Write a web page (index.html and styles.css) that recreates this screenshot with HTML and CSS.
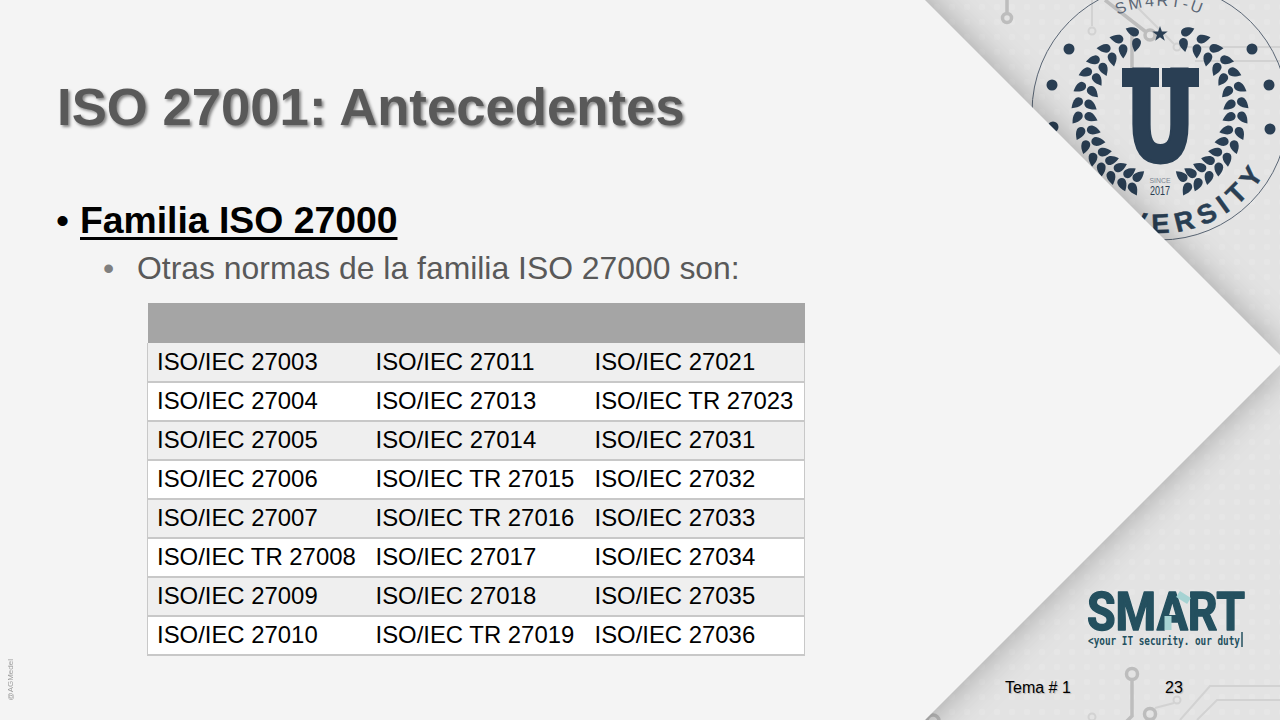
FILE: index.html
```html
<!DOCTYPE html>
<html lang="es">
<head>
  <meta charset="UTF-8">
  <title>ISO 27001: Antecedentes</title>
  <link rel="stylesheet" href="styles.css">
</head>
<body>
<div class="slide">

  <!-- backdrop: grey panel, circuit traces, badge and logo, then the pale chevron on top -->
  <svg class="backdrop" width="1280" height="720" viewBox="0 0 1280 720">
    <defs>
      <pattern id="dots" width="15" height="15" patternUnits="userSpaceOnUse">
        <rect x="4" y="4" width="6" height="6" rx="2" fill="#e6e6e6"/>
      </pattern>
      <g id="pair">
        <path transform="translate(0 -83) rotate(-48) scale(.88)" d="M0-9C3-5 5-2 5 2A5 5 0 0 1-5 2C-5-2-3-5 0-9Z"/>
        <path transform="translate(-1 -70) rotate(-150) scale(.88)" d="M0-9C3-5 5-2 5 2A5 5 0 0 1-5 2C-5-2-3-5 0-9Z"/>
      </g>
      <g id="sprig">
        <use href="#pair" transform="rotate(-19)"/>
        <use href="#pair" transform="rotate(-31)"/>
        <use href="#pair" transform="rotate(-42)"/>
        <use href="#pair" transform="rotate(-53)"/>
        <use href="#pair" transform="rotate(-63)"/>
        <use href="#pair" transform="rotate(-74)"/>
        <use href="#pair" transform="rotate(-85)"/>
        <use href="#pair" transform="rotate(-95)"/>
        <use href="#pair" transform="rotate(-106)"/>
        <use href="#pair" transform="rotate(-116)"/>
        <use href="#pair" transform="rotate(-126)"/>
        <use href="#pair" transform="rotate(-135)"/>
        <use href="#pair" transform="rotate(-144)"/>
        <use href="#pair" transform="rotate(-153)"/>
        <use href="#pair" transform="rotate(-161)"/>
      </g>
      <path id="ring-top" d="M1054 112A106 106 0 0 1 1266 112"/>
      <path id="ring-bottom" d="M1039 112A121 121 0 0 0 1281 112"/>
    </defs>

    <rect x="900" width="380" height="720" fill="#e3e3e3"/>
    <rect x="900" width="380" height="720" fill="url(#dots)"/>

    <g class="trace-dark">
      <path d="M1007 0V12"/>
      <circle cx="1007" cy="18" r="4.5"/>
      <path d="M1105 0L1146 32"/>
      <circle cx="1150" cy="35" r="5"/>
      <path d="M1132 35V70"/>
      <circle cx="1132" cy="674" r="5.5"/>
      <path d="M1132 680V716L1124 724"/>
      <circle cx="1150" cy="714" r="5.5"/>
      <circle cx="933" cy="721" r="6"/>
    </g>
    <g class="trace-light">
      <path d="M1092 0V26"/>
      <circle cx="1092" cy="31" r="3.5"/>
      <path d="M1130 0L1174 44"/>
      <circle cx="1177" cy="47" r="3.5"/>
      <path d="M1181 47H1280M1195 61H1280"/>
      <path d="M1155 708L1174 703"/>
      <circle cx="1177" cy="700" r="3.5"/>
      <circle cx="1092" cy="717" r="3.5"/>
      <path d="M1180 720L1210 686H1280M1197 720L1217 700H1280"/>
    </g>

    <g class="badge">
      <circle class="badge-line" cx="1160" cy="112" r="128"/>
      <circle cx="1069" cy="49" r="5.5"/>
      <circle cx="1052" cy="85" r="5.5"/>
      <circle cx="1053" cy="127" r="5.5"/>
      <circle cx="1252" cy="49" r="5.5"/>
      <circle cx="1269" cy="85" r="5.5"/>
      <circle cx="1270" cy="129" r="5.5"/>
      <path d="M1160 26l1.9 5.5 5.8.1-4.6 3.5 1.7 5.6-4.8-3.4-4.8 3.4 1.7-5.6-4.6-3.5 5.8-.1Z"/>
      <g transform="translate(1160 110)">
        <use href="#sprig"/>
        <use href="#sprig" transform="scale(-1 1)"/>
      </g>
      <text class="badge-u" x="1160.5" y="161" text-anchor="middle" textLength="70" lengthAdjust="spacingAndGlyphs">U</text>
      <!-- varsity slabs over the top of the U -->
      <rect x="1122" y="68" width="37" height="19"/>
      <rect x="1162" y="68" width="37" height="19"/>
      <text class="badge-since" x="1160" y="183" text-anchor="middle" textLength="21" lengthAdjust="spacingAndGlyphs">SINCE</text>
      <text class="badge-year" x="1160" y="195" text-anchor="middle" textLength="20" lengthAdjust="spacingAndGlyphs">2017</text>
      <text class="badge-top"><textPath href="#ring-top" startOffset="50%" text-anchor="middle">SM4RT-U</textPath></text>
      <text class="badge-name"><textPath href="#ring-bottom" startOffset="23.5%">UNIVERSITY</textPath></text>
    </g>

    <g class="logo">
      <text class="logo-word" x="1087" y="630" textLength="158" lengthAdjust="spacingAndGlyphs">SMART</text>
      <path class="logo-accent" d="M1178 594L1189 601M1168 616V630"/>
      <text class="logo-tag" x="1088" y="645" textLength="152" lengthAdjust="spacingAndGlyphs">&lt;your IT security. our duty</text>
      <path class="logo-cursor" d="M1242 632V647"/>
    </g>

    <polygon class="chevron" points="-40,-40 885,-40 1285,360 885,760 -40,760"/>
  </svg>

  <h1 class="title">ISO 27001: Antecedentes</h1>

  <ul class="outline">
    <li class="outline-head"><span class="head-text">Familia ISO 27000</span></li>
    <li class="outline-sub">Otras normas de la familia ISO 27000 son:</li>
  </ul>

  <table class="norms">
    <thead>
      <tr><th></th><th></th><th></th></tr>
    </thead>
    <tbody>
      <tr><td>ISO/IEC 27003</td><td>ISO/IEC 27011</td><td>ISO/IEC 27021</td></tr>
      <tr><td>ISO/IEC 27004</td><td>ISO/IEC 27013</td><td>ISO/IEC TR 27023</td></tr>
      <tr><td>ISO/IEC 27005</td><td>ISO/IEC 27014</td><td>ISO/IEC 27031</td></tr>
      <tr><td>ISO/IEC 27006</td><td>ISO/IEC TR 27015</td><td>ISO/IEC 27032</td></tr>
      <tr><td>ISO/IEC 27007</td><td>ISO/IEC TR 27016</td><td>ISO/IEC 27033</td></tr>
      <tr><td>ISO/IEC TR 27008</td><td>ISO/IEC 27017</td><td>ISO/IEC 27034</td></tr>
      <tr><td>ISO/IEC 27009</td><td>ISO/IEC 27018</td><td>ISO/IEC 27035</td></tr>
      <tr><td>ISO/IEC 27010</td><td>ISO/IEC TR 27019</td><td>ISO/IEC 27036</td></tr>
    </tbody>
  </table>

  <div class="footer">
    <span class="footer-topic">Tema # 1</span>
    <span class="footer-page">23</span>
  </div>

  <span class="credit">@AGMedel</span>
</div>
</body>
</html>
```

FILE: styles.css
```css
* {
  box-sizing: border-box;
  font-family: "Liberation Sans", Arial, sans-serif;
}
html, body {
  margin: 0;
  padding: 0;
}
body {
  background: #f4f4f4;
}
.slide {
  position: relative;
  width: 1280px;
  height: 720px;
  overflow: hidden;
  background: #f4f4f4;
  display: flex;
  flex-direction: column;
  padding: 76px 0 0 54px;
}
.backdrop {
  position: absolute;
  top: 0;
  left: 0;
}

.title,
.outline,
.norms,
.footer {
  position: relative;
}

/* title */
.title {
  margin: 0 0 0 3px;
  font-size: 52.7px;
  line-height: 61px;
  font-weight: bold;
  color: #595959;
  text-shadow: 2px 2px 3px rgba(0, 0, 0, .45);
}

/* bullets */
.outline {
  list-style: none;
  margin: 62px 0 0;
  padding: 0;
}
.outline-head {
  display: flex;
  align-items: baseline;
  font-size: 37.33px;
  line-height: 43px;
  font-weight: bold;
  color: #000;
}
.outline-head::before {
  content: "•";
  width: 24px;
  padding-left: 2px;
  font-weight: normal;
}
.head-text {
  text-decoration: underline;
  text-decoration-thickness: 3px;
  text-underline-offset: 4px;
}
.outline-sub {
  display: flex;
  align-items: baseline;
  margin: 8px 0 0 49px;
  font-size: 31.9px;
  line-height: 37px;
  color: #595959;
}
.outline-sub::before {
  content: "•";
  width: 34px;
  color: #7f7f7f;
}

/* table */
.norms {
  width: 658px;
  margin: 16px 0 0 93px;
  border-collapse: collapse;
  table-layout: fixed;
  font-size: 23.9px;
  color: #000;
}
.norms th {
  height: 40px;
  padding: 0;
  background: #a5a5a5;
}
.norms td {
  height: 39px;
  padding: 0 0 1px 9px;
  white-space: nowrap;
  background: #fff;
  border-bottom: 2px solid #c8c8c8;
}
.norms td:first-child {
  border-left: 1px solid #c8c8c8;
}
.norms td:last-child {
  border-right: 1px solid #c8c8c8;
}
.norms tbody tr:nth-child(odd) td {
  background: #efefef;
}

/* footer */
.footer {
  display: flex;
  margin: 22px 0 0 951px;
  font-size: 16px;
  line-height: 19px;
  color: #000;
  text-shadow: 1px 1px 1px rgba(0, 0, 0, .2);
}
.footer-topic {
  width: 160px;
}

.credit {
  position: absolute;
  left: 6px;
  bottom: 20px;
  writing-mode: vertical-rl;
  transform: rotate(180deg);
  font-size: 8px;
  color: #9a9a9a;
}

/* backdrop parts */
.chevron {
  fill: #f4f4f4;
  filter: drop-shadow(0 0 18px rgba(0, 0, 0, .3));
}
.trace-dark {
  fill: none;
  stroke: #bdbdbd;
  stroke-width: 3.5;
}
.trace-light {
  fill: none;
  stroke: #d2d2d2;
  stroke-width: 2;
}
.badge {
  fill: #2a3f54;
}
.badge-line {
  fill: none;
  stroke: #5a6675;
  stroke-width: 1;
}
.badge-u {
  font-family: "DejaVu Sans", sans-serif;
  font-size: 126px;
  font-weight: bold;
  stroke: #2a3f54;
  stroke-width: 3;
}
.badge-since {
  font-size: 8px;
  fill: #7d8794;
}
.badge-year {
  font-size: 12px;
}
.badge-top {
  font-size: 16px;
  letter-spacing: 2.5px;
  fill: #5a6675;
}
.badge-name {
  font-family: "DejaVu Serif", serif;
  font-size: 27px;
  font-weight: bold;
  letter-spacing: 7px;
  stroke: #2a3f54;
  stroke-width: .5;
}
.logo {
  fill: #24505f;
}
.logo-word {
  font-family: Roboto, sans-serif;
  font-size: 53px;
  font-weight: bold;
  stroke: #24505f;
  stroke-width: 1.5;
  stroke-linejoin: round;
}
.logo-accent {
  fill: none;
  stroke: #a6d3d3;
  stroke-width: 7;
}
.logo-tag {
  font-family: "DejaVu Sans Mono", monospace;
  font-size: 12px;
  font-weight: bold;
}
.logo-cursor {
  stroke: #24505f;
  stroke-width: 1.5;
}
```
